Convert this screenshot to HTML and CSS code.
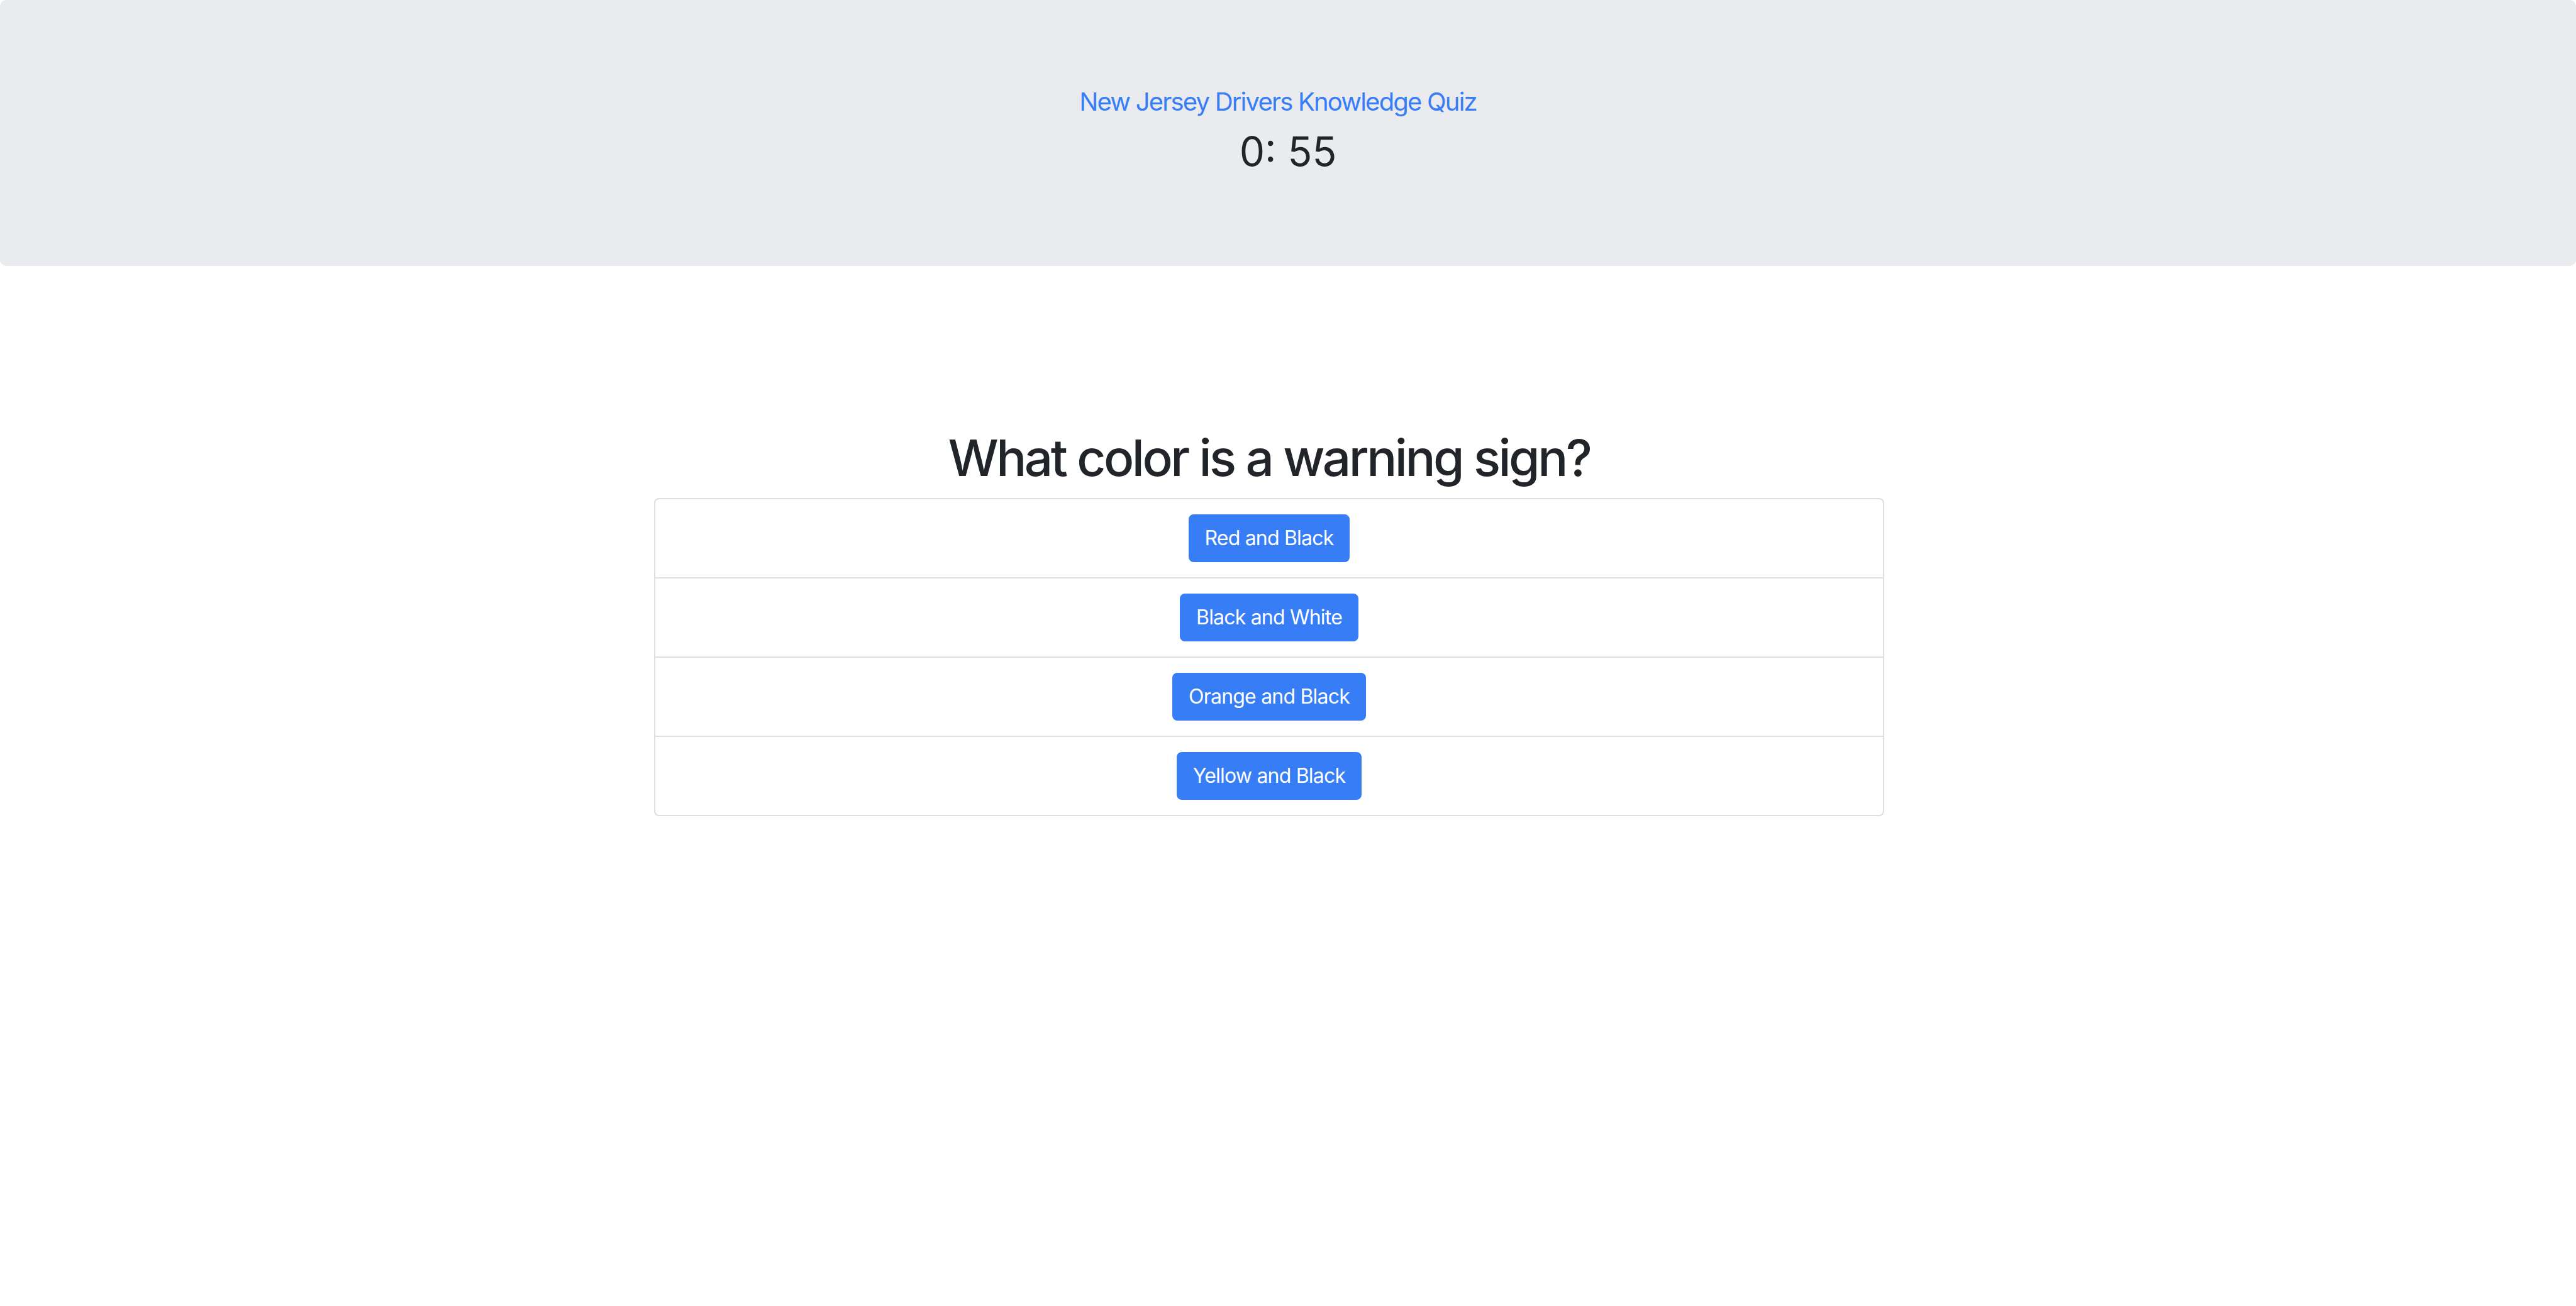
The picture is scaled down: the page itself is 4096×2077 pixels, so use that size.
FILE: index.html
```html
<!DOCTYPE html>
<html lang="en">
<head>
<meta charset="utf-8">
<title>New Jersey Drivers Knowledge Quiz</title>
<link rel="stylesheet" href="styles.css">
</head>
<body>
<header class="jumbotron">
  <a class="brand" href="#">New Jersey Drivers Knowledge Quiz</a>
  <h2 class="timer">0: 55</h2>
</header>
<main class="main">
  <section class="quiz">
    <h1 class="question">What color is a warning sign?</h1>
    <ul class="answers">
      <li class="answer"><button class="btn">Red and Black</button></li>
      <li class="answer"><button class="btn">Black and White</button></li>
      <li class="answer"><button class="btn">Orange and Black</button></li>
      <li class="answer"><button class="btn">Yellow and Black</button></li>
    </ul>
  </section>
</main>
</body>
</html>
```
FILE: styles.css
```css
html, body {
  margin: 0;
  padding: 0;
  background: #ffffff;
}
body {
  font-family: Inter, "Noto Sans", "Liberation Sans", sans-serif;
  color: #212529;
}
.jumbotron {
  background: #e9ebef;
  border-radius: 10px;
  height: 423px;
  box-sizing: border-box;
  padding-top: 132px;
  text-align: center;
}
.brand {
  display: inline-block;
  font-size: 40px;
  line-height: 60px;
  letter-spacing: -0.045em;
  color: #377df6;
  text-decoration: none;
  margin-right: 32px;
  vertical-align: top;
}
.timer {
  margin: 10px 0 0;
  font-size: 64px;
  line-height: 77px;
  font-weight: 400;
  color: #212529;
}
.main {
  display: flex;
  justify-content: center;
  padding-right: 60px;
  padding-top: 257px;
}
.quiz {
  width: 1956px;
}
.question {
  margin: 0 0 16px;
  font-size: 80px;
  line-height: 96px;
  font-weight: 500;
  letter-spacing: -0.044em;
  text-align: center;
  color: #212529;
}
.answers {
  list-style: none;
  margin: 0;
  padding: 0;
  border: 2px solid #dfdfdf;
  border-radius: 8px;
}
.answer {
  padding: 24px 40px;
  text-align: center;
  border-bottom: 2px solid #dfdfdf;
  height: 76px;
}
.answer:last-child {
  border-bottom: 0;
}
.btn {
  font-family: Inter, "Noto Sans", "Liberation Sans", sans-serif;
  font-size: 32px;
  line-height: 48px;
  letter-spacing: -0.025em;
  padding: 12px 24px;
  height: 76px;
  box-sizing: border-box;
  border: 2px solid #377df6;
  background: #377df6;
  color: #ffffff;
  border-radius: 8px;
  cursor: pointer;
}
```
